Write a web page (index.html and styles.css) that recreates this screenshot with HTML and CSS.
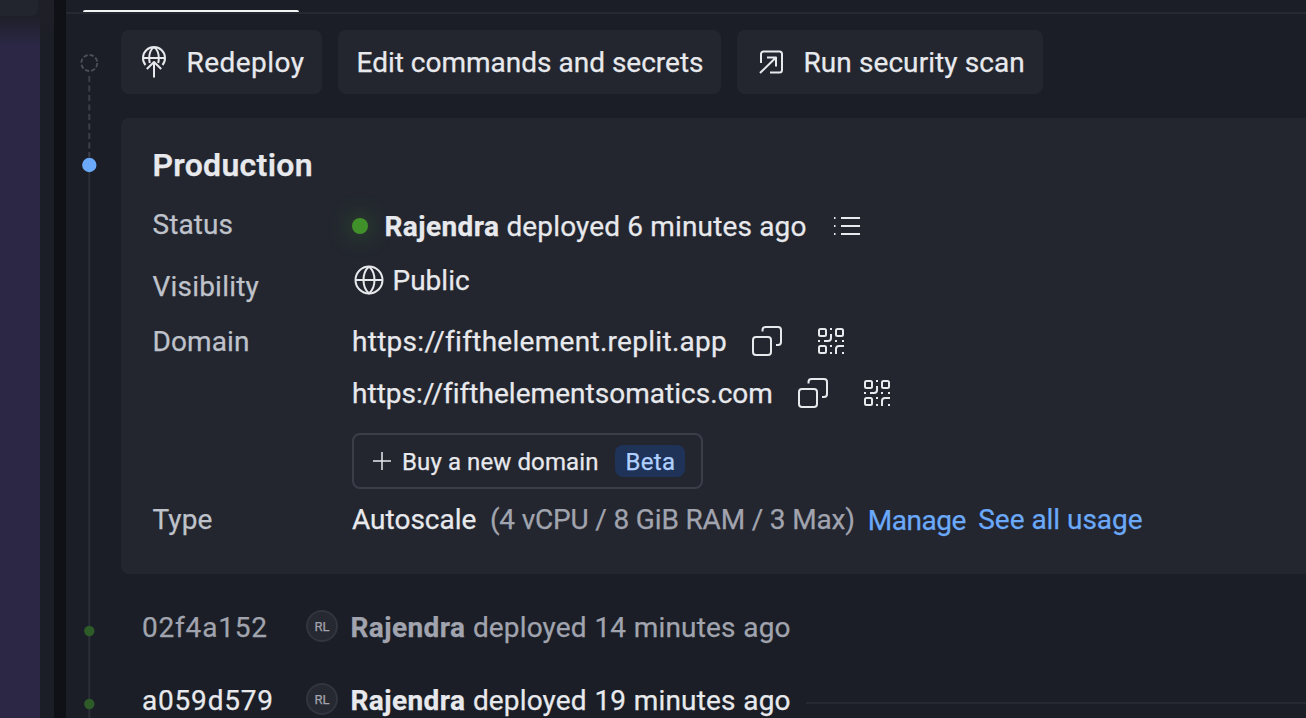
FILE: index.html
```html
<!DOCTYPE html>
<html lang="en">
<head>
<meta charset="utf-8">
<title>Deployments</title>
<link rel="stylesheet" href="styles.css">
</head>
<body>
<svg class="defs" width="0" height="0" aria-hidden="true">
  <symbol id="copy" viewBox="0 0 30 30"><rect x="1" y="11" width="18" height="18" rx="3"/><path d="M10.500 5.500V4a3 3 0 0 1 3-3H26a3 3 0 0 1 3 3v12a3 3 0 0 1-3 3h-2"/></symbol>
  <symbol id="qr" viewBox="0 0 28 28"><rect x="2" y="2" width="7" height="7" rx="1.500"/><rect x="19" y="2" width="7" height="7" rx="1.500"/><rect x="2" y="19" width="7" height="7" rx="1.500"/><path d="M14 7v4a3 3 0 0 1-3 3H7M14 1v2M1 14h2M18 14h2M25 14h2M14 18v2M14 25v2M19 27v-5a3 3 0 0 1 3-3h5M25 26h2"/></symbol>
</svg>
<div class="app">
  <aside class="side"><div class="side-tab"></div></aside>
  <div class="gutter"></div>
  <div class="divider"></div>
  <main class="main">
    <header class="tabs"><div class="tab-active"></div></header>
    <div class="content">
      <svg class="rail" width="54" height="704" viewBox="66 14 54 704">
        <circle cx="89.3" cy="63" r="8" fill="none" stroke="#4e515b" stroke-width="1.8" stroke-dasharray="4.3 2"/>
        <path d="M89.3 76V157" stroke="#3c3f49" stroke-width="2" stroke-dasharray="6 3.5"/>
        <path d="M89.3 165V718" stroke="#2b2e37" stroke-width="2"/>
        <circle cx="89.3" cy="165" r="7.2" fill="#6ba9fa"/>
        <circle cx="89.3" cy="631" r="5.2" fill="#2d5c29"/>
        <circle cx="89.3" cy="704" r="5.2" fill="#2d5c29"/>
      </svg>
      <div class="column">
        <div class="actions">
          <button class="btn redeploy"><svg class="icon" width="26" height="34" viewBox="0 0 26 34"><path d="M4.500 20A11 11 0 1 1 21.500 20M2 13h22M13 2C9.500 4.500 8.200 9 8.200 13q0 2.500.6 5M13 2C16.500 4.500 17.800 9 17.800 13q0 2.500-.6 5M13 32.500V17M5.800 24 13 17l7.200 7"/></svg><span class="t-redeploy">Redeploy</span></button>
          <button class="btn edit"><span>Edit commands and secrets</span></button>
          <button class="btn scan"><svg class="icon" width="24" height="24" viewBox="0 0 24 24"><path d="M2 13V4a2.500 2.500 0 0 1 2.500-2.500h16A2.500 2.500 0 0 1 23 4v16a2.500 2.500 0 0 1-2.500 2.500H11M1 23 17 7.500M8 7.500h9v9"/></svg><span class="t-scan">Run security scan</span></button>
        </div>
        <section class="card">
          <h2 class="title">Production</h2>
          <div class="row status">
            <span class="label">Status</span>
            <div class="value"><i class="dot"></i><span class="who"><b>Rajendra</b> deployed 6 minutes ago</span>
              <svg class="icon" width="28" height="20" viewBox="0 0 28 20"><path d="M8 2h19M8 10h19M8 18h19M1 2h1.500M1 10h1.500M1 18h1.500"/></svg></div>
          </div>
          <div class="row visibility">
            <span class="label">Visibility</span>
            <div class="value"><svg class="icon" width="30" height="30" viewBox="0 0 30 30"><circle cx="15" cy="15" r="13.500"/><path d="M1.500 15h27M15 1.500C11 5 9.500 10 9.500 15S11 25 15 28.500C19 25 20.500 20 20.500 15S19 5 15 1.500"/></svg><span class="t-public">Public</span></div>
          </div>
          <div class="row domain">
            <span class="label">Domain</span>
            <div class="domains">
              <div class="url"><span class="t-url1">https://fifthelement.replit.app</span><svg class="icon" width="30" height="30"><use href="#copy"/></svg><svg class="icon qr" width="28" height="28"><use href="#qr"/></svg></div>
              <div class="url"><span class="t-url2">https://fifthelementsomatics.com</span><svg class="icon" width="30" height="30"><use href="#copy"/></svg><svg class="icon qr" width="28" height="28"><use href="#qr"/></svg></div>
              <button class="buy"><svg class="icon plus" width="18" height="18" viewBox="0 0 18 18"><path d="M0 9h18M9 0v18"/></svg><span class="t-buy">Buy a new domain</span><span class="beta">Beta</span></button>
            </div>
          </div>
          <div class="row type">
            <span class="label">Type</span>
            <div class="value"><span>Autoscale</span><span class="spec">(4 vCPU / 8 GiB RAM / 3 Max)</span><a class="manage">Manage</a><a class="usage">See all usage</a></div>
          </div>
        </section>
        <div class="history">
          <div class="entry muted"><span class="hash">02f4a152</span><span class="avatar">RL</span><span class="event"><b>Rajendra</b> deployed 14 minutes ago</span></div>
          <div class="entry"><span class="hash">a059d579</span><span class="avatar">RL</span><span class="event"><b>Rajendra</b> deployed 19 minutes ago</span><i class="rule"></i></div>
        </div>
      </div>
    </div>
  </main>
</div>
</body>
</html>
```
FILE: styles.css
```css
* { box-sizing: border-box; }
body { margin: 0; background: #1b1e26; color: #e8e9ed; font: 28px/52px Roboto, "Liberation Sans", sans-serif; -webkit-text-stroke: .25px currentColor; overflow: hidden; }
button { font: inherit; color: inherit; border: 0; padding: 0; }
b { font-weight: 700; letter-spacing: .4px; }
.defs { display: block; position: absolute; }
.app { display: flex; width: 1306px; height: 718px; overflow: hidden; white-space: nowrap; }
.side { width: 40px; background: linear-gradient(#1e1f29 15px, #2b2745 46px); }
.side-tab { width: 38px; height: 16px; background: #22252d; border-radius: 0 0 7px 0; }
.gutter { width: 14px; background: linear-gradient(#201f28, #1b1e26 48px); }
.divider { width: 12px; background: #101116; }
.main { width: 1240px; flex: none; }
.tabs { height: 14px; border-bottom: 2px solid #262932; padding: 10px 0 0 17px; }
.tab-active { width: 216px; height: 2px; background: #f2f3f5; border-radius: 2px 2px 0 0; }
.content { display: flex; }
.rail { flex: none; display: block; }
.column { flex: 1; padding: 16px 0 0 .5px; }
.actions { display: flex; gap: 16px; }
.btn { height: 64px; border-radius: 8px; background: #23262f; display: flex; align-items: center; }
.btn span, .t-public, .t-buy { padding-top: 2px; }
.redeploy { width: 201.5px; padding-left: 20.5px; gap: 19.5px; }
.t-redeploy { letter-spacing: .45px; }
.edit { width: 383px; padding-left: 18.5px; }
.scan { width: 306px; padding-left: 21.5px; gap: 21px; }
.t-scan { letter-spacing: .08px; }
.icon { flex: none; fill: none; stroke: currentColor; stroke-width: 2; stroke-linejoin: round; }
.card { height: 456px; margin-top: 24px; padding: 20px 0 0 32px; background: #23262f; border-radius: 8px 0 0 8px; }
.title { margin: 0 0 8px; font-size: 32px; line-height: 54px; font-weight: 600; letter-spacing: .3px; }
.row { display: flex; align-items: flex-start; }
.label { width: 199.5px; flex: none; color: #bfc2ca; letter-spacing: .1px; }
.value, .url { display: flex; align-items: center; height: 52px; }
.status { height: 54px; }
.status .label { line-height: 50px; }
.status .value { height: 54px; }
.dot { width: 16px; height: 16px; border-radius: 50%; background: #409129; margin: 0 16.5px 2px 0; box-shadow: 0 0 22px 4px #3f912950; }
.who { margin-right: 26px; letter-spacing: .15px; }
.status .icon { margin-bottom: 2px; }
.visibility { height: 62px; }
.visibility .label { line-height: 66px; letter-spacing: .2px; }
.visibility .value { gap: 9px; padding-left: 1.5px; }
.url .icon { margin: 0 0 2px 25px; }
.url .qr { margin-left: 35px; }
.t-url1 { letter-spacing: .29px; }
.t-url2 { letter-spacing: .03px; }
.buy { display: flex; align-items: center; width: 351px; height: 56px; margin-top: 13px; padding-left: 19px; border: 2px solid #3b3e49; border-radius: 8px; background: none; font-size: 24px; line-height: 32px; }
.plus { margin-right: 11px; stroke-width: 1.5; }
.t-buy { letter-spacing: .1px; }
.beta { width: 70px; height: 32px; margin-left: 17px; padding-top: 1px; text-align: center; border-radius: 8px; background: #1f3258; color: #b0d1ff; letter-spacing: .3px; }
.type .value, .type .label { height: 62px; line-height: 62px; }
.spec { margin-left: 13.5px; color: #a1a4ae; letter-spacing: -.17px; }
.manage { margin-left: 13px; padding-top: 2px; color: #6ba9fa; letter-spacing: -.5px; }
.usage { margin-left: 12.5px; color: #6ba9fa; letter-spacing: -.04px; }
.history { padding: 17px 0 0 21.5px; }
.entry { display: flex; align-items: center; height: 73px; }
.muted { color: #a1a4ae; }
.hash { width: 164px; letter-spacing: .8px; }
.event { letter-spacing: .16px; word-spacing: .5px; }
.avatar { width: 32px; height: 32px; margin: 0 12.5px 3px 0; border: 2px solid #32353f; border-radius: 50%; background: #262932; color: #a1a4ae; font-size: 13px; line-height: 29px; text-align: center; }
.rule { flex: 1; height: 2px; margin: 5px 0 0 15px; background: #262932; }
```
